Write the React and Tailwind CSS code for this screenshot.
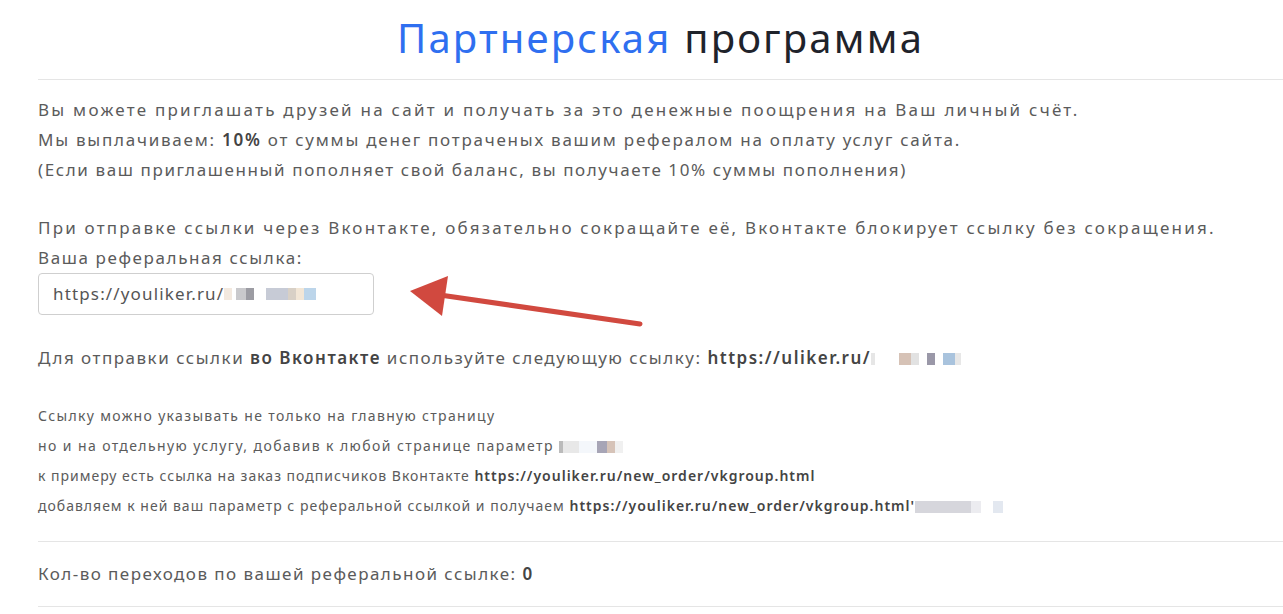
import React from 'react';

const font = { fontFamily: '"Noto Sans", "Liberation Sans", sans-serif' };

// blurred pieces of the referral id
function Blur({ cells }) {
  return (
    <span className="inline-flex items-center align-middle tracking-normal">
      {cells.map((c, i) => (
        <span key={i} className="inline-block h-[12px]" style={{ width: c[0], background: c[1] }} />
      ))}
    </span>
  );
}

export default function App() {
  return (
    <div className="relative bg-white text-[#5b5b5b] overflow-hidden w-[1283px] h-[614px] pl-[38px]" style={font}>
      <h1 className="text-center text-[40px] leading-[48px] pt-[14px] pb-[17px] tracking-[2.2px]">
        <span className="text-[#2f6ff0]">Партнерская</span>{' '}
        <span className="text-[#1f232b]">программа</span>
      </h1>
      <div className="border-t border-[#e5e5e5]" />

      <div className="pt-[15px] text-[17px] leading-[30px]">
        <p className="tracking-[2.25px]">Вы можете приглашать друзей на сайт и получать за это денежные поощрения на Ваш личный счёт.</p>
        <p className="tracking-[1.75px]">Мы выплачиваем: <b className="font-semibold text-[#444]">10%</b> от суммы денег потраченых вашим рефералом на оплату услуг сайта.</p>
        <p className="tracking-[1.6px]">(Если ваш приглашенный пополняет свой баланс, вы получаете 10% суммы пополнения)</p>
        <p className="mt-[28px] tracking-[2.2px]">При отправке ссылки через Вконтакте, обязательно сокращайте её, Вконтакте блокирует ссылку без сокращения.</p>
        <p className="tracking-[1.6px]">Ваша реферальная ссылка:</p>
        <div className="w-[336px] h-[42px] border border-[#cfcfcf] rounded-[4px] flex items-center px-[14px] text-[#555] tracking-[1.15px]">
          https://youliker.ru/
          <Blur cells={[[8, '#f3e9df'], [4, '#fff'], [10, '#c9c9cc'], [8, '#9c9ca3'], [12, '#fff'], [22, '#c7cbd6'], [8, '#d8d0c6'], [8, '#f2e6d6'], [12, '#bcd5ea']]} />
        </div>
        <p className="mt-[28px] tracking-[1.5px]">
          Для отправки ссылки <b className="font-semibold text-[#444]">во Вконтакте</b> используйте следующую ссылку:{' '}
          <b className="font-semibold text-[#444]">https://uliker.ru/</b>
          <Blur cells={[[4, '#e6e6e6'], [24, '#fff'], [12, '#d6c2b6'], [8, '#e2e2e2'], [8, '#fff'], [8, '#9a98a8'], [8, '#fff'], [12, '#a9c3dd'], [6, '#e7e7e7']]} />
        </p>

        <div className="mt-[28px] text-[14px] leading-[30px]">
          <p className="tracking-[1.33px]">Ссылку можно указывать не только на главную страницу</p>
          <p className="tracking-[1.42px]">
            но и на отдельную услугу, добавив к любой странице параметр{' '}
            <Blur cells={[[4, '#bbb'], [16, '#e8e8e8'], [18, '#f4f7fb'], [10, '#a7a5b6'], [8, '#d6c3b8'], [8, '#f0f0f0']]} />
          </p>
          <p className="tracking-[1px]">к примеру есть ссылка на заказ подписчиков Вконтакте <b className="font-semibold text-[#444]">https://youliker.ru/new_order/vkgroup.html</b></p>
          <p className="tracking-[1px]">
            добавляем к ней ваш параметр с реферальной ссылкой и получаем{' '}
            <b className="font-semibold text-[#444]">https://youliker.ru/new_order/vkgroup.html'</b>
            <Blur cells={[[56, '#d6d6dc'], [10, '#ececf0'], [12, '#fff'], [10, '#e3e8f0']]} />
          </p>
        </div>
      </div>

      <div className="mt-[20px] border-t border-[#e5e5e5]" />
      <p className="pt-[17px] pb-[17px] text-[17px] leading-[30px] tracking-[1.45px]">
        Кол-во переходов по вашей реферальной ссылке: <b className="font-semibold text-[#444]">0</b>
      </p>
      <div className="border-t border-[#e5e5e5]" />

      <svg className="absolute left-[400px] top-[274px]" width="260" height="60" viewBox="0 0 260 60">
        <line x1="240" y1="50" x2="40" y2="21" stroke="#d1493f" strokeWidth="5" strokeLinecap="round" />
        <polygon points="10,17 48,2 42,42" fill="#d1493f" />
      </svg>
    </div>
  );
}
